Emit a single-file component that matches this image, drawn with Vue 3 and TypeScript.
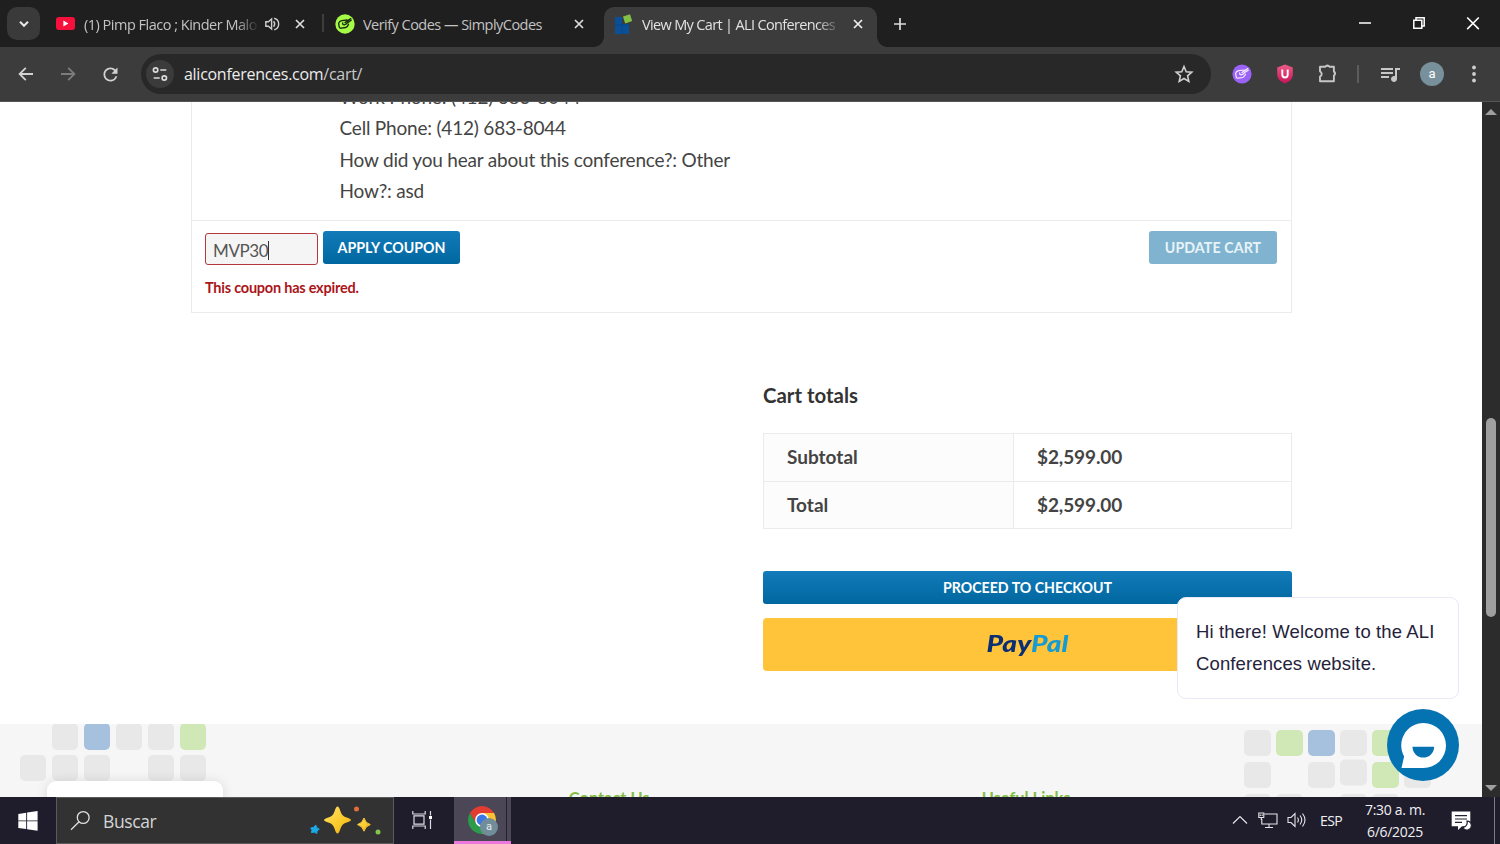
<script setup lang="ts">
type Tone = 'grey' | 'blue' | 'green' | 'none'

const details: string[] = [
  'Work Phone: (412) 683-8044',
  'Cell Phone: (412) 683-8044',
  'How did you hear about this conference?: Other',
  'How?: asd',
]

const totals = [
  { label: 'Subtotal', value: '$2,599.00' },
  { label: 'Total', value: '$2,599.00' },
]

const leftTiles: Tone[] = [
  'none', 'grey', 'blue', 'grey', 'grey', 'green',
  'grey', 'grey', 'grey', 'none', 'grey', 'grey',
]

const rightTiles: Tone[] = [
  'grey', 'green', 'blue', 'grey', 'green', 'none',
  'grey', 'none', 'grey', 'grey', 'green', 'grey',
  'grey', 'grey', 'none', 'grey', 'grey', 'none',
]
</script>

<template>
  <div class="screen">
    <header class="tabs">
      <button class="tab-search">
        <svg width="12" height="8" viewBox="0 0 12 8"><path d="M2 1.800l4 4 4-4" fill="none" stroke="#e8e8e8" stroke-width="2" /></svg>
      </button>
      <div class="tab first">
        <svg class="fav" width="19" height="13" viewBox="0 0 19 13"><rect width="19" height="13" rx="3" fill="#f8103c" /><path d="M7.400 3.600v5.800l5-2.900z" fill="#fff" /></svg>
        <span class="tab-title t1">(1) Pimp Flaco ; Kinder Malo</span>
        <svg class="sound" width="16" height="16" viewBox="0 0 16 16" fill="none" stroke="#d0d0d0" stroke-width="1.400"><path d="M1.800 5.800h2.600L7.600 3v10L4.400 10.200H1.800z" /><path d="M9.600 5.300q2.200 2.700 0 5.400M10.200 2.200a6 6 0 0 1 0 11.600" /></svg>
        <svg class="close" width="12" height="12" viewBox="0 0 12 12"><path d="M2 2l8 8M10 2l-8 8" stroke="#dedede" stroke-width="1.700" /></svg>
      </div>
      <div class="divider"></div>
      <div class="tab second">
        <svg class="fav" width="20" height="20" viewBox="0 0 20 20"><circle cx="10" cy="10" r="9.700" fill="#a6fb46" /><g fill="none" stroke="#17280b" stroke-width="1.300" stroke-linejoin="round" stroke-linecap="round"><path d="M12.200 6L6.800 6.700Q4.300 7.300 3.600 9.400L4.300 13.300Q4.800 14.400 6.300 14.200L10.800 13.500Q12.800 12.500 13.500 10.200" /><path d="M7.700 8.800Q7.400 10.800 9.300 10.900 11.500 10.300 12.600 8.600L16.200 6.200M10 8.600L15.800 4.600" /></g></svg>
        <span class="tab-title t2">Verify Codes — SimplyCodes</span>
        <svg class="close" width="12" height="12" viewBox="0 0 12 12"><path d="M2 2l8 8M10 2l-8 8" stroke="#dedede" stroke-width="1.700" /></svg>
      </div>
      <div class="tab active">
        <svg class="fav" width="18" height="22" viewBox="0 0 18 22"><path d="M0 4h7v7h7v10H0z" fill="#0b4f97" /><path d="M0 12h14M7 11v10" stroke="#083f7d" stroke-width=".6" /><path d="M8 3.500l7-2.300 2.200 6.800-7 2.500z" fill="#83bf45" /></svg>
        <span class="tab-title t3">View My Cart | ALI Conferences</span>
        <svg class="close" width="12" height="12" viewBox="0 0 12 12"><path d="M2 2l8 8M10 2l-8 8" stroke="#f0f0f0" stroke-width="1.700" /></svg>
      </div>
      <svg class="plus" width="14" height="14" viewBox="0 0 14 14"><path d="M7 1v12M1 7h12" stroke="#dcdcdc" stroke-width="1.700" /></svg>
      <div class="window-controls">
        <svg width="54" height="46" viewBox="0 0 54 46"><path d="M21 23h12" stroke="#fff" stroke-width="1.500" /></svg>
        <svg width="54" height="46" viewBox="0 0 54 46" fill="none" stroke="#fff" stroke-width="1.500"><path d="M21.800 20.300h8v8h-8zM24 20v-2.200h8.200V26H30" /></svg>
        <svg width="54" height="46" viewBox="0 0 54 46"><path d="M21.200 17.500l11.600 11.600M32.800 17.500L21.200 29.100" stroke="#fff" stroke-width="1.600" /></svg>
      </div>
    </header>

    <nav class="toolbar">
      <div class="tool"><svg width="18" height="18" viewBox="0 0 18 18"><path d="M16 9H2.800M8.800 2.800L2.600 9l6.200 6.200" fill="none" stroke="#d2d2d2" stroke-width="1.800" /></svg></div>
      <div class="tool"><svg width="18" height="18" viewBox="0 0 18 18"><path d="M2 9h13.200M9.200 2.800L15.400 9l-6.200 6.200" fill="none" stroke="#7c7c7c" stroke-width="1.800" /></svg></div>
      <div class="tool"><svg width="21" height="21" viewBox="0 0 24 24"><path fill="#d2d2d2" d="M17.650 6.350A7.958 7.958 0 0 0 12 4c-4.420 0-7.990 3.580-7.990 8s3.570 8 7.990 8c3.730 0 6.840-2.550 7.730-6h-2.080A5.990 5.990 0 0 1 12 18c-3.310 0-6-2.690-6-6s2.690-6 6-6c1.660 0 3.140.69 4.220 1.780L13 11h7V4l-2.350 2.350z" /></svg></div>
      <div class="address">
        <span class="site-info">
          <svg width="16" height="16" viewBox="0 0 16 16" fill="none" stroke="#dcdcdc" stroke-width="1.700"><circle cx="3.600" cy="4" r="2.200" /><path d="M8.300 4h6M1.700 12h6" /><circle cx="12.300" cy="12" r="2.200" /></svg>
        </span>
        <span class="url">aliconferences.com<i>/cart/</i></span>
        <svg class="star" width="20" height="20" viewBox="0 0 20 20"><path d="M10 2.500l2.200 5.200 5.600.5-4.200 3.700 1.200 5.500-4.800-2.900-4.800 2.900 1.200-5.500-4.200-3.700 5.600-.5z" fill="none" stroke="#d0d0d0" stroke-width="1.600" /></svg>
      </div>
      <div class="extensions">
        <div class="ext"><svg width="20" height="20" viewBox="0 0 20 20"><circle cx="10" cy="10" r="9.600" fill="#9a62f7" /><g fill="none" stroke="#f7efff" stroke-width="1.200" stroke-linejoin="round" stroke-linecap="round"><path d="M12.200 6L6.800 6.700Q4.300 7.300 3.600 9.400L4.300 13.300Q4.800 14.400 6.300 14.200L10.800 13.500Q12.800 12.500 13.500 10.200" /><path d="M7.700 8.800Q7.400 10.800 9.300 10.900 11.500 10.300 12.600 8.600L16.200 6.200M10 8.600L15.800 4.600" /></g></svg></div>
        <div class="ext"><svg width="18" height="20" viewBox="0 0 18 20"><defs><linearGradient id="shield" x1="0" y1="0" x2="0" y2="1"><stop offset="0" stop-color="#ef5b88" /><stop offset="1" stop-color="#c61458" /></linearGradient></defs><path d="M9 .5l7.800 3v7c0 4.500-4 7.500-7.800 9-3.800-1.500-7.800-4.500-7.800-9v-7z" fill="url(#shield)" /><path d="M6.300 5.500v5.300a2.700 2.700 0 0 0 5.400 0V5.500" fill="none" stroke="#fff" stroke-width="1.900" /></svg></div>
        <div class="ext"><svg width="22" height="22" viewBox="0 0 22 22"><path d="M3 3.700h5.400a2.200 2.200 0 0 1 4 0h4.500v5a2.100 2.100 0 0 1 0 3.800v5.700H3v-4.500a3 3 0 0 0 0-5.400z" fill="none" stroke="#c6c6c6" stroke-width="1.900" stroke-linejoin="round" /><path d="M8.400 3.700a2.200 2.200 0 0 1 4 0zM16.900 8.700a2.100 2.100 0 0 1 0 3.800z" fill="#c6c6c6" /></svg></div>
      </div>
      <div class="bar-divider"></div>
      <div class="tool"><svg width="24" height="24" viewBox="0 0 24 24"><path fill="#c8c8c8" d="M15 6H3v2h12V6zm0 4H3v2h12v-2zM3 16h8v-2H3v2zM17 6v8.180c-.31-.11-.65-.18-1-.18-1.660 0-3 1.340-3 3s1.340 3 3 3 3-1.340 3-3V8h3V6h-5z" /></svg></div>
      <div class="tool"><span class="avatar">a</span></div>
      <div class="tool"><svg width="6" height="20" viewBox="0 0 6 20" fill="#cfcfcf"><circle cx="3" cy="3.500" r="1.900" /><circle cx="3" cy="10" r="1.900" /><circle cx="3" cy="16.500" r="1.900" /></svg></div>
    </nav>

    <div class="viewport">
      <main class="page">
        <section class="cart">
          <div class="item-details">
            <p v-for="(line, n) in details" :key="n">{{ line }}</p>
          </div>
          <div class="actions">
            <div class="coupon">
              <div class="coupon-row">
                <div class="code"><span>MVP30</span><b class="caret"></b></div>
                <button class="btn apply">APPLY COUPON</button>
              </div>
              <p class="error">This coupon has expired.</p>
            </div>
            <button class="btn update">UPDATE CART</button>
          </div>
        </section>

        <section class="totals">
          <h2>Cart totals</h2>
          <div class="table">
            <div v-for="row in totals" :key="row.label" class="row">
              <div class="cell label">{{ row.label }}</div>
              <div class="cell value">{{ row.value }}</div>
            </div>
          </div>
          <button class="btn checkout">PROCEED TO CHECKOUT</button>
          <button class="paypal"><span class="wordmark"><span class="pay">Pay</span><span class="pal">Pal</span></span></button>
        </section>

        <footer class="footer">
          <div class="tiles left"><i v-for="(tone, n) in leftTiles" :key="n" :class="tone"></i></div>
          <h3 class="contact">Contact Us</h3>
          <h3 class="links">Useful Links</h3>
          <div class="tiles right"><i v-for="(tone, n) in rightTiles" :key="n" :class="[tone, { raised: n === 9 }]"></i></div>
          <div class="notice"></div>
        </footer>

        <div class="greeting"><p>Hi there! Welcome to the ALI</p><p>Conferences website.</p></div>
        <svg class="chat" width="72" height="72" viewBox="0 0 72 72"><circle cx="36" cy="36" r="36" fill="#0573b2" /><path d="M36.500 14a22.500 22.500 0 0 1 0 45H14.500l2.600-11.500A22.500 22.500 0 0 1 36.500 14z" fill="#fff" /><path d="M25.500 37.800h21.600a10.800 10.800 0 0 1-21.600 0z" fill="#0573b2" /></svg>
      </main>
      <aside class="scrollbar">
        <svg width="12" height="6" viewBox="0 0 12 6"><path d="M0 6l6-6 6 6z" fill="#9f9f9f" /></svg>
        <div class="thumb"></div>
        <svg class="down" width="12" height="6" viewBox="0 0 12 6"><path d="M0 0l6 6 6-6z" fill="#9f9f9f" /></svg>
      </aside>
    </div>

    <div class="taskbar">
      <div class="start"><svg width="20" height="20" viewBox="0 0 20 20" fill="#fff"><path d="M.3 2.900L8.200 1.700v7.700H.3zM9.100 1.600L19.600 0v9.400H9.100zM.3 10.300h7.900V18L.3 16.900zM9.100 10.300h10.500v9.500L9.100 18.200z" /></svg></div>
      <div class="search">
        <svg class="lens" width="21" height="21" viewBox="0 0 21 21" fill="none" stroke="#e0e0e0" stroke-width="1.300"><circle cx="13.200" cy="7.500" r="5.900" /><path d="M9.100 11.700L1 19.800" /></svg>
        <span class="search-text">Buscar</span>
        <svg class="sparkles" width="74" height="32" viewBox="0 0 74 32"><defs><linearGradient id="gold" x1="0" y1="0" x2="1" y2="1"><stop offset="0" stop-color="#ffe36a" /><stop offset=".6" stop-color="#fbc928" /><stop offset="1" stop-color="#eda719" /></linearGradient></defs><path d="M28.500 2.500Q30 2.500 31.500 7.500 33 12 37 13.200 42 14.700 42 16T37 18.800Q33 20 31.500 24.500 30 29.500 28.500 29.500T25.500 24.500Q24 20 20 18.800 15 17.300 15 16T20 13.200Q24 12 25.500 7.500 27 2.500 28.500 2.500z" fill="url(#gold)" /><path d="M55 14q1.200 5.200 6.300 6.600-5.100 1.500-6.300 6.600-1.300-5.100-6.500-6.600 5.200-1.400 6.500-6.600z" fill="url(#gold)" stroke="#f9c839" /><path d="M6.800 21q.2 3.300 3.500 4.200-3.200 1-2.500 4.400-2.200-2.500-5.400-1 1.700-2.800-.7-4.600 3.500.2 5.100-3z" fill="#1baae8" stroke="#1baae8" /><circle cx="47.500" cy="5" r="2.500" fill="#e56d39" /><circle cx="69" cy="28" r="2.500" fill="#83c74a" /></svg>
      </div>
      <div class="task-view"><svg width="20" height="20" viewBox="0 0 20 20" fill="none" stroke="#dedce5" stroke-width="1.200"><path d="M.8 1v3h12.400V1M.8 19v-3h12.400v3M2 5.800h10v8.400H2zM18.500 1v4.500M18.500 9.500V19" /><path d="M17 6h3v3h-3z" fill="#fff" stroke="none" /></svg></div>
      <div class="chrome-task">
        <svg width="32" height="32" viewBox="0 0 32 32"><path d="M2.900 8A14 14 0 0 1 27.100 8H15L8.900 18.500z" fill="#e33c30" /><path d="M27.100 8A14 14 0 0 1 15 29l6.100-10.500L15 8z" fill="#f9c232" /><path d="M2.900 8A14 14 0 0 0 15 29l6.100-10.500H9z" fill="#2c9c4c" /><circle cx="15" cy="15" r="6.900" fill="#fff" /><circle cx="15" cy="15" r="5.400" fill="#3b78e7" /><circle cx="22" cy="22" r="9" fill="#708d99" /></svg>
        <span class="badge">a</span>
      </div>
      <div class="tray">
        <svg class="chev" width="16" height="10" viewBox="0 0 16 10"><path d="M1 8.500l7-7 7 7" fill="none" stroke="#e6e4ea" stroke-width="1.200" /></svg>
        <svg class="net" width="20" height="17" viewBox="0 0 20 17" fill="none" stroke="#e6e4ea" stroke-width="1.100"><path d="M6.500 2H19v10H3.800V7M11 12v3.500M7 15.500h8M.8 1h5v4.500h-5zM3.300 5.500V8M2.300 2.500v1.500M4.200 2.500v1.500" /></svg>
        <svg class="vol" width="20" height="18" viewBox="0 0 20 18" fill="none" stroke="#e6e4ea" stroke-width="1.100"><path d="M1 6.500h3L8 2.500v13L4 11.500H1zM10.500 6.500q1.800 2.500 0 5M13 4.500q3.500 4.500 0 9M15.500 2.500q5 6.500 0 13" /></svg>
        <span class="lang">ESP</span>
        <div class="clock"><span>7:30 a. m.</span><span>6/6/2025</span></div>
        <svg class="notify" width="21" height="20" viewBox="0 0 21 20"><path d="M.7.600h18.600v14.600H11L7 19v-3.800H.7z" fill="#fff" /><path d="M4 4.700h12M4 8h12M4 11.300h7" stroke="#24202f" stroke-width="1.200" /><path d="M16 10.200a4.400 4.400 0 1 1-4 6.300 5 5 0 0 0 4-6.300z" fill="#fff" stroke="#24202f" stroke-width="1.200" /></svg>
        <div class="peek"></div>
      </div>
    </div>
  </div>
</template>

<style>
html,
body {
  margin: 0;
  overflow: hidden;
}
</style>

<style scoped>
* { box-sizing: border-box; }
p, h2, h3 { margin: 0; }
svg { display: block; flex: none; }
button { border: 0; padding: 0; margin: 0; }
.screen {
  width: 1500px;
  height: 844px;
  display: flex;
  flex-direction: column;
  overflow: hidden;
  background: #fff;
  font-family: "Open Sans", "Noto Sans", sans-serif;
}

/* tab strip */
.tabs { height: 47px; flex: none; display: flex; background: #1f1f1f; }
.tab-search {
  width: 33px; height: 33px; margin: 7px 7px 0; border-radius: 10px;
  background: #3a3a3a; display: grid; place-items: center; flex: none;
}
.tab { display: flex; align-items: center; height: 47px; flex: none; }
.first { width: 275px; padding-left: 9px; }
.second { width: 280px; padding-left: 11px; }
.active {
  width: 273px; height: 40px; margin-top: 7px; padding: 0 0 7px 11px; position: relative;
  background: #3c3c3c; border-radius: 10px 10px 0 0;
}
.active::before, .active::after {
  content: ""; position: absolute; bottom: 0; width: 10px; height: 10px;
}
.active::before { left: -10px; background: radial-gradient(circle at 0 0, #1f1f1f 9.500px, #3c3c3c 10px); }
.active::after { right: -10px; background: radial-gradient(circle at 100% 0, #1f1f1f 9.500px, #3c3c3c 10px); }
.divider { width: 2px; height: 18px; margin: 14px 0 0; background: #3e3e3e; flex: none; }
.tab-title {
  font-size: 14.500px; line-height: 22px; white-space: nowrap; overflow: hidden; color: #c3c3c3; flex: none; padding-top: 2px;
}
.t1 { width: 174px; margin-left: 9px; letter-spacing: -.5px; mask-image: linear-gradient(90deg, #000 152px, transparent 175px); }
.t2 { width: 195px; margin-left: 8px; letter-spacing: -.53px; }
.t3 { width: 195px; margin-left: 9px; letter-spacing: -.65px; color: #e2e2e2; mask-image: linear-gradient(90deg, #000 174px, transparent 200px); }
.sound { margin-left: 6px; }
.close { flex: none; }
.first .close { margin-left: 14px; }
.second .close { margin-left: 15px; }
.active .close { margin-left: 15px; }
.plus { margin: 17px 0 0 16px; }
.window-controls { display: flex; margin-left: auto; }

/* toolbar */
.toolbar {
  height: 55px; flex: none; display: flex; align-items: center; padding: 0 5px 1px;
  background: linear-gradient(#3c3c3c 54px, #555 54px);
}
.tool { width: 42px; height: 40px; display: grid; place-items: center; flex: none; }
.address {
  width: 1070px; height: 40px; margin-left: 10px; border-radius: 20px; background: #282828;
  display: flex; align-items: center; padding: 0 17px 0 5px; flex: none;
}
.site-info { width: 28px; height: 28px; border-radius: 50%; background: #3b3b3b; display: grid; place-items: center; }
.url { margin-left: 10px; font-size: 16px; color: #ececec; letter-spacing: -.28px; line-height: 24px; }
.url i { font-style: normal; color: #c8c8c8; }
.star { margin-left: auto; }
.extensions { display: flex; margin-left: 9.500px; }
.ext { width: 43px; display: grid; place-items: center; }
.bar-divider { width: 2px; height: 18px; background: #5c5c5c; margin: 0 10px 0 7.500px; }
.avatar {
  width: 24px; height: 24px; border-radius: 50%; background: #78909c; color: #fff; font: 13px/23px Roboto, sans-serif; text-align: center;
}

/* page */
.viewport { height: 695px; flex: none; display: flex; }
.page { width: 1482px; height: 695px; position: relative; overflow: hidden; background: #fff; font-family: Lato, sans-serif; color: #444; }
.cart { width: 1101px; height: 211px; margin-left: 191px; border: 1px solid #ebebeb; border-top: 0; overflow: hidden; }
.item-details { height: 119px; padding-left: 147.500px; border-bottom: 1px solid #ebebeb; display: flex; flex-direction: column; }
.item-details p { font-size: 19px; line-height: 31.600px; letter-spacing: -.2px; white-space: nowrap; flex: none; }
.item-details p:first-child { margin-top: -21.400px; }
.actions { display: flex; justify-content: space-between; padding: 10px 14px 0 13px; }
.coupon-row { display: flex; gap: 5px; }
.code {
  width: 113px; height: 32px; margin-top: 2px; border: 1px solid #b3383c; border-radius: 3px; background: #f5f5f5;
  display: flex; align-items: center; padding: 2px 0 0 7px; font-size: 17px; letter-spacing: -.4px; color: #555;
}
.caret { width: 1px; height: 19px; background: #333; }
.btn {
  height: 33px; border-radius: 3px; background: linear-gradient(#127bb9, #00679f); color: #fff;
  font: 700 14.200px/32px Lato, sans-serif; text-align: center; white-space: nowrap; display: block;
}
.apply { width: 137px; }
.update { width: 128px; background: #80b3cf; color: #e8f3f8; letter-spacing: .1px; }
.error { margin-top: 12px; font-size: 14.500px; line-height: 22px; letter-spacing: -.23px; font-weight: 700; color: #aa1519; }
.totals { width: 529px; margin: 67px 0 0 763px; }
.totals h2 { font-size: 20.400px; line-height: 30px; font-weight: 700; color: #333; }
.table { margin-top: 23px; border: 1px solid #ebebeb; height: 96px; }
.row { display: flex; height: 47px; }
.row + .row { border-top: 1px solid #ebebeb; }
.cell { font-size: 19px; font-weight: 700; line-height: 46px; padding-left: 23px; }
.label { width: 250px; background: #fcfcfc; border-right: 1px solid #ebebeb; }
.value { letter-spacing: -.1px; }
.checkout { width: 529px; margin-top: 42px; }
.paypal {
  width: 529px; height: 53px; margin-top: 14px; border-radius: 4px; background: #ffc439; display: block;
  font: italic 900 23.500px/50px Lato, sans-serif; text-align: center;
}
.wordmark { display: block; height: 53px; transform: scaleX(1.2); }
.pay { color: #092e74; }
.pal { color: #159bd4; }
.footer {
  width: 1482px; height: 73px; margin-top: 53px; background: #f6f6f6; position: relative; overflow: hidden; display: flex;
}
.tiles { display: grid; grid-template-columns: repeat(6, 26.500px); column-gap: 5.500px; grid-auto-rows: 26.500px; flex: none; }
.tiles i { border-radius: 5px; }
.left { margin: -.8px 0 0 19.800px; row-gap: 5px; }
.right { margin: 5.500px 0 0 171.700px; row-gap: 5.500px; }
.grey { background: #e8e8e8; }
.blue { background: #a5c1dd; }
.green { background: #d0e8b5; }
.raised { transform: translateY(-2.500px); }
.footer h3 { font-size: 16.400px; line-height: 22px; color: #83bd43; font-weight: 700; white-space: nowrap; margin-top: 62.500px; }
.contact { width: 413px; margin-left: 362.500px; }
.links { width: 91px; }
.notice {
  position: absolute; left: 47px; top: 57px; width: 176px; height: 40px; border-radius: 9px; background: #fff; box-shadow: 0 1px 12px rgba(0, 0, 0, .13);
}
.greeting {
  position: absolute; left: 1177px; top: 495px; width: 282px; height: 102px; padding: 17.500px 0 0 18px;
  border: 1px solid #e9e9f7; border-radius: 9px; background: #fff;
  font: 18.500px/32px "Liberation Sans", Arial, sans-serif; letter-spacing: .12px; color: #25233b; white-space: nowrap;
}
.chat { position: absolute; left: 1387px; top: 607px; }
.scrollbar { width: 18px; background: #2c2c2c; display: flex; flex-direction: column; align-items: center; padding: 7px 0 6px; }
.thumb { width: 10px; height: 199px; margin-top: 303px; border-radius: 5px; background: #9f9f9f; }
.down { margin-top: auto; }

/* taskbar */
.taskbar { height: 47px; flex: none; display: flex; background: #1f1c2b; color: #f0f0f2; }
.start { width: 56px; display: grid; place-items: center; }
.search { width: 338px; background: #323232; border: 1px solid #5b5b5b; display: flex; align-items: center; padding-left: 13px; }
.search-text { font-size: 17.500px; letter-spacing: -.4px; width: 60px; margin: 1px 0 0 12px; color: #d5d5d5; }
.sparkles { margin: -2px 0 0 146px; }
.task-view { width: 60px; padding: 13px 0 0 18px; }
.chrome-task {
  width: 57px; padding: 8px 0 0 13px; position: relative; border-bottom: 3px solid #ec78dd;
  background: linear-gradient(90deg, #4b4756 52px, #25212f 52px, #25212f 53px, #4b4756 53px);
}
.badge { position: absolute; left: 26px; top: 21px; width: 18px; text-align: center; font: 11px/18px Roboto, sans-serif; color: #e6edf0; }
.tray { display: flex; margin-left: auto; }
.chev { margin-top: 18px; }
.net { margin: 15px 0 0 10px; }
.vol { margin: 14px 0 0 9px; }
.lang { width: 26px; margin: 13px 0 0 13px; font-size: 14px; line-height: 22px; letter-spacing: -.6px; }
.clock { width: 84px; margin: 2px 0 0 7px; display: flex; flex-direction: column; text-align: center; font-size: 14px; line-height: 22px; letter-spacing: -.3px; }
.notify { margin: 14px 0 0 14px; }
.peek { width: 1px; height: 47px; background: #7c7987; margin: 0 5px 0 22px; }
</style>
